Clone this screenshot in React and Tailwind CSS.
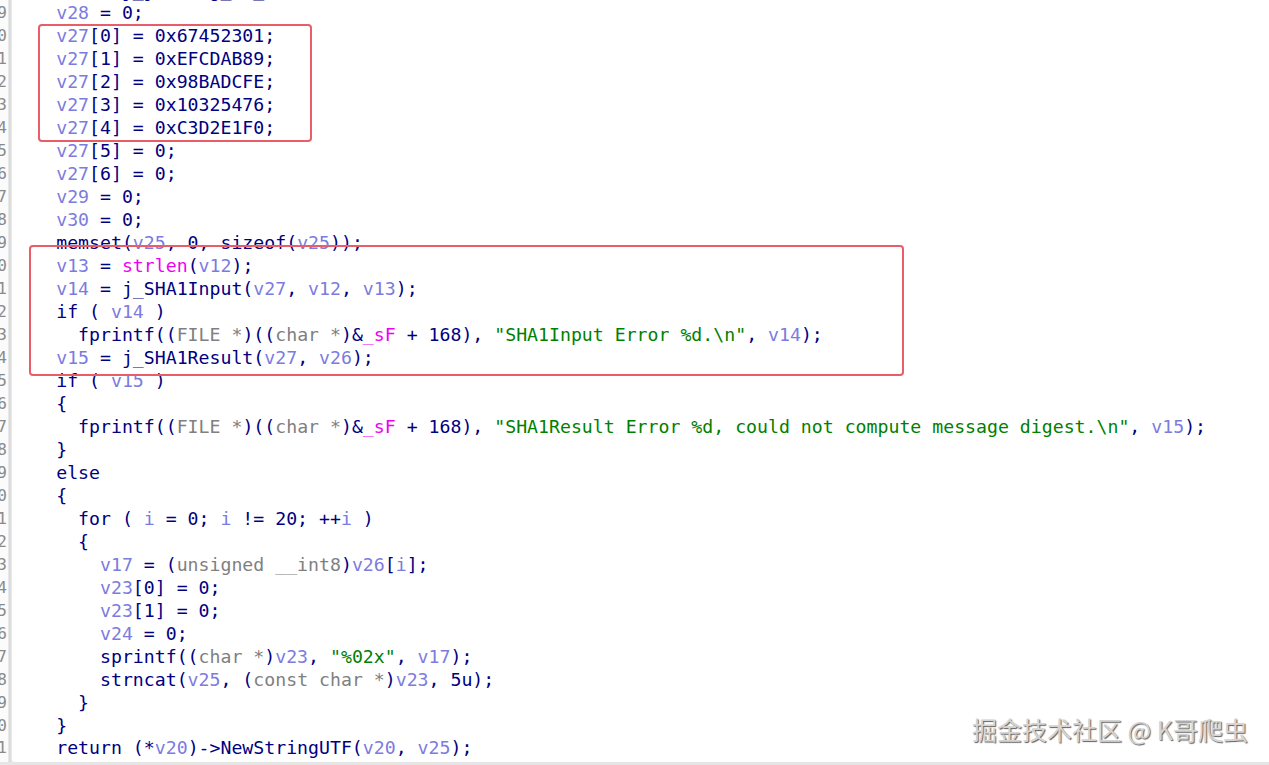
import React from "react";

const N = "text-[#000080]";
const V = "text-[#7b7be0]";
const M = "text-[#f000f0]";
const G = "text-[#808080]";
const S = "text-[#008000]";

const L = (indent, ...segs) => ({ indent, segs });

const lines = [
  L(2, [V, "v12"], [N, " = j_jstring_to_char("], [V, "v20"], [N, ", "], [V, "a3"], [N, ");"]),
  L(2, [V, "v28"], [N, " = 0;"]),
  L(2, [V, "v27"], [N, "[0] = 0x67452301;"]),
  L(2, [V, "v27"], [N, "[1] = 0xEFCDAB89;"]),
  L(2, [V, "v27"], [N, "[2] = 0x98BADCFE;"]),
  L(2, [V, "v27"], [N, "[3] = 0x10325476;"]),
  L(2, [V, "v27"], [N, "[4] = 0xC3D2E1F0;"]),
  L(2, [V, "v27"], [N, "[5] = 0;"]),
  L(2, [V, "v27"], [N, "[6] = 0;"]),
  L(2, [V, "v29"], [N, " = 0;"]),
  L(2, [V, "v30"], [N, " = 0;"]),
  L(2, [N, "memset("], [V, "v25"], [N, ", 0, sizeof("], [V, "v25"], [N, "));"]),
  L(2, [V, "v13"], [N, " = "], [M, "strlen"], [N, "("], [V, "v12"], [N, ");"]),
  L(2, [V, "v14"], [N, " = j_SHA1Input("], [V, "v27"], [N, ", "], [V, "v12"], [N, ", "], [V, "v13"], [N, ");"]),
  L(2, [N, "if ( "], [V, "v14"], [N, " )"]),
  L(4, [N, "fprintf(("], [G, "FILE *"], [N, ")(("], [G, "char *"], [N, ")&"], [M, "_sF"], [N, " + 168), "], [S, "\"SHA1Input Error %d.\\n\""], [N, ", "], [V, "v14"], [N, ");"]),
  L(2, [V, "v15"], [N, " = j_SHA1Result("], [V, "v27"], [N, ", "], [V, "v26"], [N, ");"]),
  L(2, [N, "if ( "], [V, "v15"], [N, " )"]),
  L(2, [N, "{"]),
  L(4, [N, "fprintf(("], [G, "FILE *"], [N, ")(("], [G, "char *"], [N, ")&"], [M, "_sF"], [N, " + 168), "], [S, "\"SHA1Result Error %d, could not compute message digest.\\n\""], [N, ", "], [V, "v15"], [N, ");"]),
  L(2, [N, "}"]),
  L(2, [N, "else"]),
  L(2, [N, "{"]),
  L(4, [N, "for ( "], [V, "i"], [N, " = 0; "], [V, "i"], [N, " != 20; ++"], [V, "i"], [N, " )"]),
  L(4, [N, "{"]),
  L(6, [V, "v17"], [N, " = ("], [G, "unsigned __int8"], [N, ")"], [V, "v26"], [N, "["], [V, "i"], [N, "];"]),
  L(6, [V, "v23"], [N, "[0] = 0;"]),
  L(6, [V, "v23"], [N, "[1] = 0;"]),
  L(6, [V, "v24"], [N, " = 0;"]),
  L(6, [N, "sprintf(("], [G, "char *"], [N, ")"], [V, "v23"], [N, ", "], [S, "\"%02x\""], [N, ", "], [V, "v17"], [N, ");"]),
  L(6, [N, "strncat("], [V, "v25"], [N, ", ("], [G, "const char *"], [N, ")"], [V, "v23"], [N, ", 5u);"]),
  L(4, [N, "}"]),
  L(2, [N, "}"]),
  L(2, [N, "return (*"], [V, "v20"], [N, ")->NewStringUTF("], [V, "v20"], [N, ", "], [V, "v25"], [N, ");"]),
];

export default function App() {
  return (
    <div className="relative w-[1269px] h-[765px] overflow-hidden bg-[#e8e8e8] flex flex-col font-['DejaVu_Sans_Mono',monospace]">
      <div className="flex flex-1 min-h-0">
        {/* gutter */}
        <div className="w-[8px] shrink-0 bg-[#fbfbfb] overflow-hidden">
          <div className="mt-[-20.5px] flex flex-col">
            {lines.map((_, i) => (
              <div key={i} className="h-[22.97px] leading-[22.97px] flex justify-end pr-[1px] text-[16px] text-[#8a8a8a] whitespace-pre">
                <span className="shrink-0">{28 + i}</span>
              </div>
            ))}
          </div>
        </div>
        <div className="w-[4px] shrink-0 bg-gradient-to-r from-[#ededed] via-[#d6d6d6] to-[#efefef]" />
        {/* code */}
        <div className="flex-1 bg-white rounded-bl-[3px] overflow-hidden">
          <div className="mt-[-20.5px] pl-[22.3px] flex flex-col text-[18.2px]">
            {lines.map((ln, i) => (
              <div key={i} className="h-[22.97px] leading-[22.97px] whitespace-pre">
                {" ".repeat(ln.indent)}
                {ln.segs.map(([c, t], j) => (
                  <span key={j} className={c}>{t}</span>
                ))}
              </div>
            ))}
          </div>
        </div>
      </div>
      <div className="h-[3px] shrink-0 bg-[#e6e6e6]" />

      {/* highlight boxes */}
      <div className="absolute left-[38px] top-[24px] w-[274px] h-[118px] border-2 border-[#e85d68] rounded-[4px]" />
      <div className="absolute left-[29px] top-[245px] w-[875px] h-[131px] border-2 border-[#e85d68] rounded-[4px]" />

      {/* watermark */}
      <div className="absolute right-[21px] top-[710px] text-[25px] leading-[38px] text-[#d4d4d4] [text-shadow:1px_1px_1px_#5f5f5f] font-['Noto_Sans_CJK_SC','Noto_Sans',sans-serif] whitespace-pre">
        掘金技术社区 @ K哥爬虫
      </div>
    </div>
  );
}
